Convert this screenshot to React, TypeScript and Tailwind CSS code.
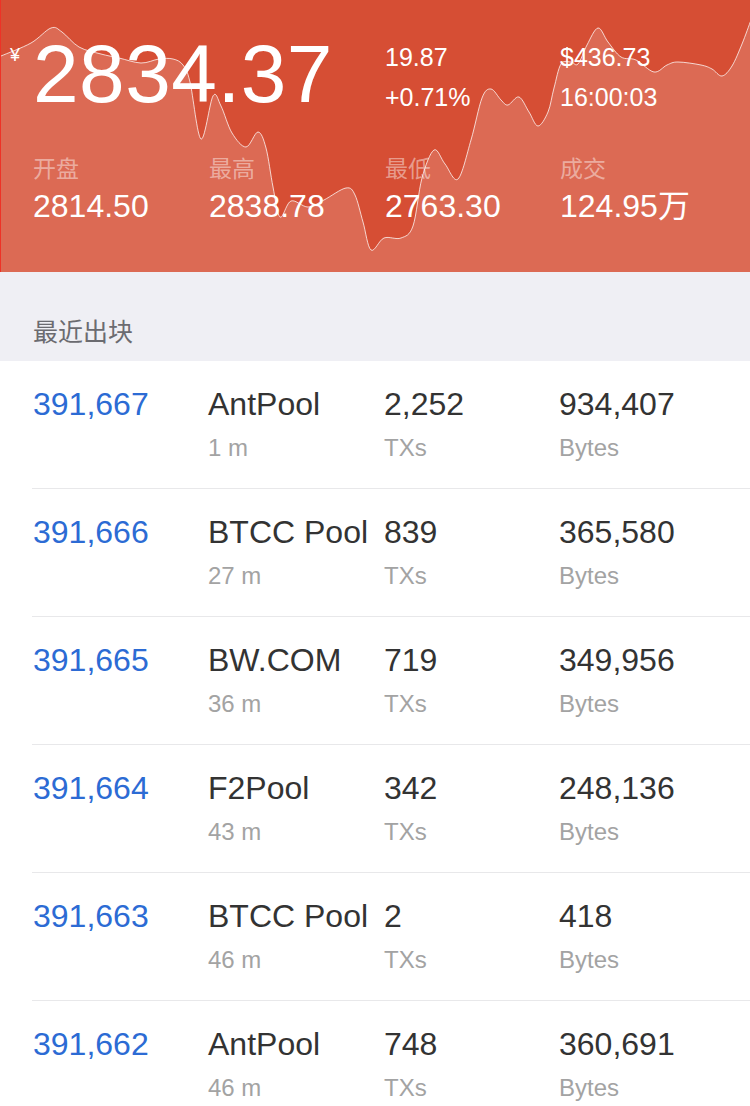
import React from 'react';

type Block = {
  height: string;
  pool: string;
  age: string;
  txs: string;
  bytes: string;
};

const BLOCKS: Block[] = [
  { height: '391,667', pool: 'AntPool', age: '1 m', txs: '2,252', bytes: '934,407' },
  { height: '391,666', pool: 'BTCC Pool', age: '27 m', txs: '839', bytes: '365,580' },
  { height: '391,665', pool: 'BW.COM', age: '36 m', txs: '719', bytes: '349,956' },
  { height: '391,664', pool: 'F2Pool', age: '43 m', txs: '342', bytes: '248,136' },
  { height: '391,663', pool: 'BTCC Pool', age: '46 m', txs: '2', bytes: '418' },
  { height: '391,662', pool: 'AntPool', age: '46 m', txs: '748', bytes: '360,691' },
];

const STATS = [
  { label: '开盘', value: '2814.50' },
  { label: '最高', value: '2838.78' },
  { label: '最低', value: '2763.30' },
  { label: '成交', value: '124.95万' },
];

// price trace, in header pixels
const POINTS: [number, number][] = [
  [0, 56], [30, 43], [50, 28], [61, 32], [78, 47], [100, 54], [118, 58], [140, 63],
  [158, 59], [172, 59], [182, 65], [189, 82], [200, 139], [212, 96], [220, 106],
  [231, 133], [245, 147], [257, 132], [265, 148], [272, 187], [279, 217], [290, 201],
  [307, 207], [323, 200], [345, 188], [354, 195], [362, 222], [370, 250], [383, 238],
  [400, 238], [412, 226], [421, 178], [433, 150], [444, 164], [457, 179], [470, 140],
  [481, 98], [490, 89], [500, 100], [507, 105], [518, 97], [528, 112], [537, 126],
  [547, 112], [553, 88], [560, 64], [570, 62], [577, 64], [586, 45], [597, 28],
  [607, 42], [620, 57], [635, 60], [653, 72], [666, 65], [677, 62], [700, 65],
  [711, 69], [721, 76], [731, 66], [741, 44], [750, 20],
];

function smoothPath(pts: [number, number][]) {
  let d = `M${pts[0][0]},${pts[0][1]}`;
  for (let i = 0; i < pts.length - 1; i++) {
    const p0 = pts[i - 1] || pts[i];
    const p1 = pts[i];
    const p2 = pts[i + 1];
    const p3 = pts[i + 2] || p2;
    const c1x = p1[0] + (p2[0] - p0[0]) / 6;
    const c1y = p1[1] + (p2[1] - p0[1]) / 6;
    const c2x = p2[0] - (p3[0] - p1[0]) / 6;
    const c2y = p2[1] - (p3[1] - p1[1]) / 6;
    d += ` C${c1x.toFixed(1)},${c1y.toFixed(1)} ${c2x.toFixed(1)},${c2y.toFixed(1)} ${p2[0]},${p2[1]}`;
  }
  return d;
}

const PriceChart: React.FC = () => {
  const line = smoothPath(POINTS);
  return (
    <svg className="absolute inset-0" width="750" height="272" viewBox="0 0 750 272" aria-hidden="true">
      <path d={`${line} L750,272 L0,272 Z`} fill="rgba(255,255,255,0.16)" />
      <path d={line} fill="none" stroke="rgba(255,255,255,0.75)" strokeWidth="1" />
    </svg>
  );
};

export default function App() {
  return (
    <div className="w-[750px] h-[1106px] overflow-hidden bg-white font-['Liberation_Sans','Noto_Sans_CJK_SC',sans-serif]">
      {/* Ticker header */}
      <header className="relative h-[272px] overflow-hidden bg-[#d64e34] border-l border-[#ee3226]">
        <PriceChart />
        <div className="relative pl-[32px] text-white">
          <div className="grid grid-cols-[176px_176px_175px_175px] pt-[33px]">
            <div className="col-span-2 flex items-start">
              <span className="-ml-[23px] w-[23px] pt-[13px] text-[18px] leading-none">¥</span>
              <span className="text-[82px] leading-[82px] tracking-[0.5px]">2834.37</span>
            </div>
            <div className="flex flex-col gap-[12px] pt-[10px] text-[25px] leading-[28px]">
              <span>19.87</span>
              <span>+0.71%</span>
            </div>
            <div className="flex flex-col gap-[12px] pt-[10px] text-[25px] leading-[28px]">
              <span>$436.73</span>
              <span>16:00:03</span>
            </div>
          </div>
          <div className="grid grid-cols-[176px_176px_175px_175px] pt-[41px]">
            {STATS.map((s) => (
              <div key={s.label} className="flex flex-col">
                <span className="text-[23px] leading-[26px] text-white/45">{s.label}</span>
                <span className="mt-[6px] text-[32px] leading-[36px]">{s.value}</span>
              </div>
            ))}
          </div>
        </div>
      </header>

      {/* Section title */}
      <div className="h-[89px] bg-[#efeff4] pl-[33px] pb-[13px] flex items-end">
        <h3 className="text-[25px] leading-[32px] text-[#6b6b70]">最近出块</h3>
      </div>

      {/* Recent blocks */}
      <ul>
        {BLOCKS.map((b) => (
          <li key={b.height} className="ml-[32px] h-[128px] border-b border-[#e8e8ea] pl-[1px] pt-[24px]">
            <div className="grid grid-cols-[175px_176px_175px_175px] text-[32px] leading-[38px] text-[#333333]">
              <span className="text-[#2c6bd4]">{b.height}</span>
              <span className="whitespace-nowrap">{b.pool}</span>
              <span>{b.txs}</span>
              <span>{b.bytes}</span>
            </div>
            <div className="grid grid-cols-[175px_176px_175px_175px] mt-[10px] text-[24px] leading-[30px] text-[#a3a3a3]">
              <span />
              <span>{b.age}</span>
              <span>TXs</span>
              <span>Bytes</span>
            </div>
          </li>
        ))}
      </ul>
    </div>
  );
}
